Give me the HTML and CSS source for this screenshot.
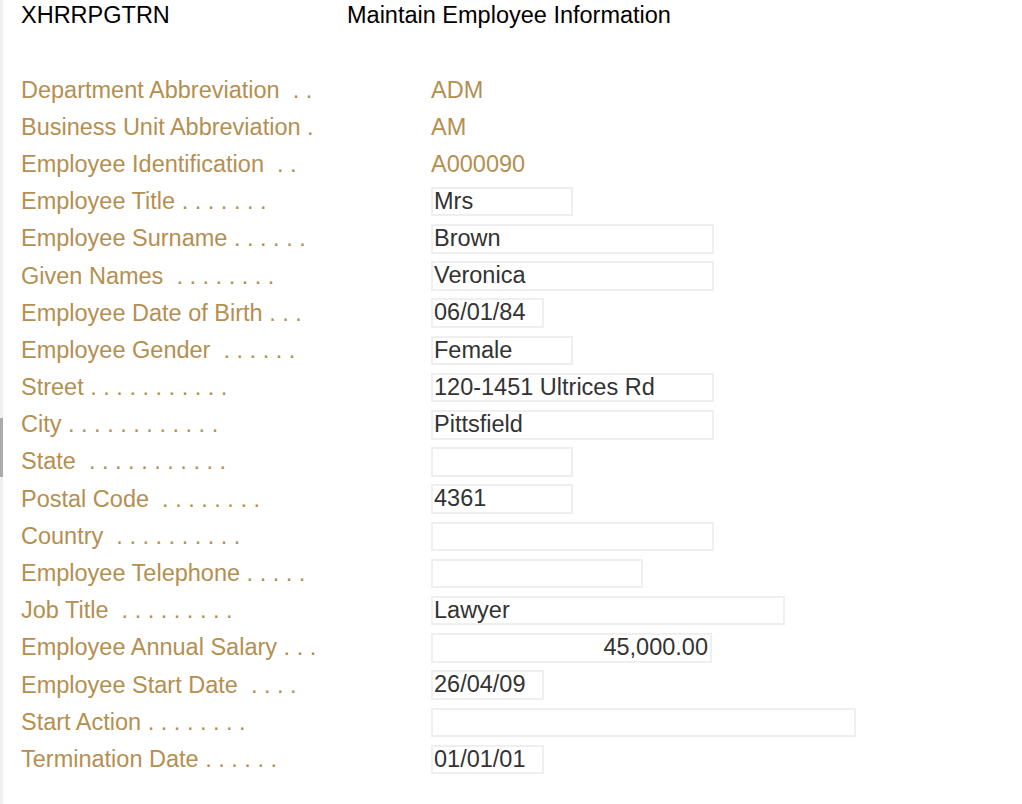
FILE: index.html
```html
<!DOCTYPE html>
<html lang="en">
<head>
<meta charset="utf-8">
<title>Maintain Employee Information</title>
<link rel="stylesheet" href="styles.css">
</head>
<body>
<div class="page">
  <div class="scroll-mark"></div>
  <div class="header">
    <span class="prog">XHRRPGTRN</span>
    <span class="title">Maintain Employee Information</span>
  </div>
  <div class="form">
    <span class="label">Department Abbreviation  . .</span>
    <span class="value">ADM</span>
    <span class="label">Business Unit Abbreviation .</span>
    <span class="value">AM</span>
    <span class="label">Employee Identification  . .</span>
    <span class="value">A000090</span>
    <span class="label">Employee Title . . . . . . .</span>
    <span class="field w10">Mrs</span>
    <span class="label">Employee Surname . . . . . .</span>
    <span class="field w20">Brown</span>
    <span class="label">Given Names  . . . . . . . .</span>
    <span class="field w20">Veronica</span>
    <span class="label">Employee Date of Birth . . .</span>
    <span class="field w8">06/01/84</span>
    <span class="label">Employee Gender  . . . . . .</span>
    <span class="field w10">Female</span>
    <span class="label">Street . . . . . . . . . . .</span>
    <span class="field w20">120-1451 Ultrices Rd</span>
    <span class="label">City . . . . . . . . . . . .</span>
    <span class="field w20">Pittsfield</span>
    <span class="label">State  . . . . . . . . . . .</span>
    <span class="field w10"></span>
    <span class="label">Postal Code  . . . . . . . .</span>
    <span class="field w10">4361</span>
    <span class="label">Country  . . . . . . . . . .</span>
    <span class="field w20"></span>
    <span class="label">Employee Telephone . . . . .</span>
    <span class="field w15"></span>
    <span class="label">Job Title  . . . . . . . . .</span>
    <span class="field w25">Lawyer</span>
    <span class="label">Employee Annual Salary . . .</span>
    <span class="field wsal num">45,000.00</span>
    <span class="label">Employee Start Date  . . . .</span>
    <span class="field w8">26/04/09</span>
    <span class="label">Start Action . . . . . . . .</span>
    <span class="field w30"></span>
    <span class="label">Termination Date . . . . . .</span>
    <span class="field w8">01/01/01</span>
  </div>
</div>
</body>
</html>
```

FILE: styles.css
```css
html, body {
  margin: 0;
  padding: 0;
  background: #ffffff;
}

body {
  font-family: "Liberation Sans", Arial, sans-serif;
  font-size: 23.5px;
}

.page {
  position: relative;
  box-sizing: border-box;
  min-height: 804px;
  border-left: 3px solid #f0f0f0;
  padding-left: 18px;
}

.scroll-mark {
  position: absolute;
  left: -3px;
  top: 418px;
  width: 3px;
  height: 59px;
  background: #ababab;
}

.header {
  display: flex;
  height: 30px;
  line-height: 30px;
  color: #000000;
}

.prog {
  width: 326px;
}

.form {
  margin-top: 41.5px;
  display: grid;
  grid-template-columns: 410px auto;
  grid-auto-rows: 37.2px;
  align-items: center;
}

.label {
  color: #b48f51;
  white-space: pre;
}

.value {
  color: #b48f51;
  justify-self: start;
}

.field {
  justify-self: start;
  box-sizing: border-box;
  height: 29.5px;
  border: 2px solid #efefef;
  padding: 0 2px 0 1px;
  line-height: 25.5px;
  color: #333333;
  white-space: pre;
  overflow: hidden;
}

.num {
  text-align: right;
}

.w8 { width: 113px; }
.w10 { width: 142px; }
.w15 { width: 212px; }
.w20 { width: 283px; }
.w25 { width: 354px; }
.w30 { width: 425px; }
.wsal { width: 281px; }
```
